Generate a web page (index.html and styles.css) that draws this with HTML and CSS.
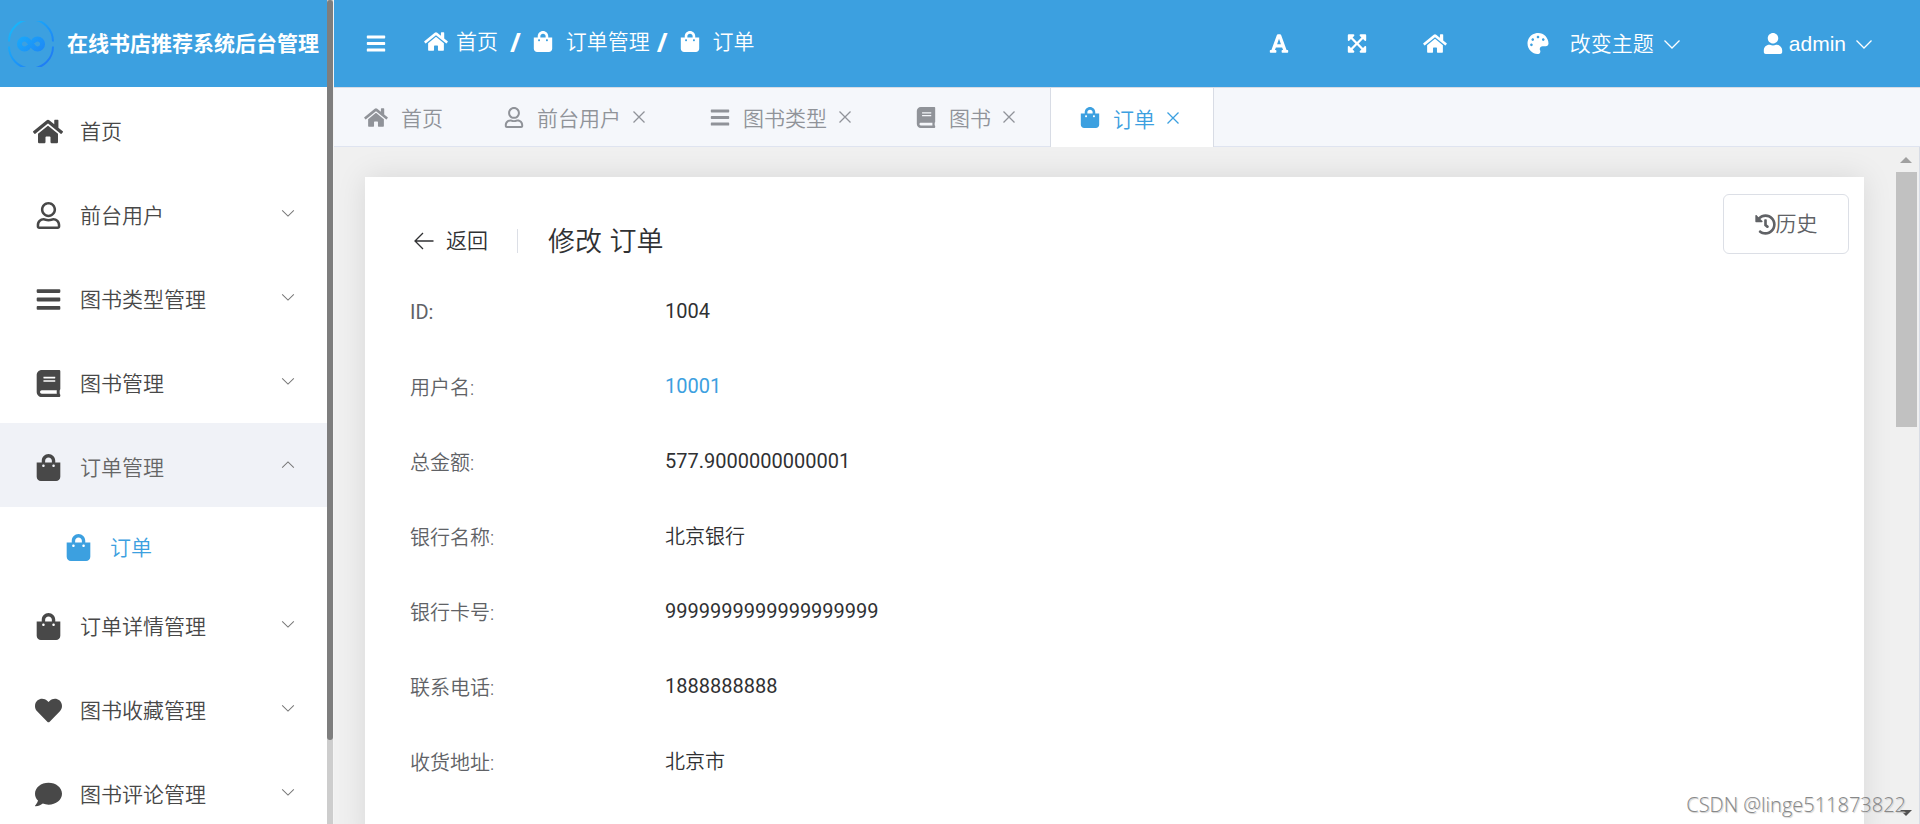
FILE: index.html
```html
<!DOCTYPE html>
<html lang="zh-CN">
<head>
<meta charset="utf-8">
<title>在线书店推荐系统后台管理</title>
<link rel="stylesheet" href="styles.css">
</head>
<body>
<svg class="sprite" aria-hidden="true">
  <symbol id="home" viewBox="0 0 576 512"><path d="M280.37 148.26L96 300.11V464a16 16 0 0 0 16 16l112.06-.29a16 16 0 0 0 15.92-16V368a16 16 0 0 1 16-16h64a16 16 0 0 1 16 16v95.64a16 16 0 0 0 16 16.05L464 480a16 16 0 0 0 16-16V300L295.67 148.26a12.19 12.19 0 0 0-15.3 0zM571.6 251.47L488 182.56V44.05a12 12 0 0 0-12-12h-56a12 12 0 0 0-12 12v72.61L318.47 43a48 48 0 0 0-61 0L4.34 251.47a12 12 0 0 0-1.6 16.9l25.5 31A12 12 0 0 0 45.15 301l235.22-193.74a12.19 12.19 0 0 1 15.3 0L530.9 301a12 12 0 0 0 16.9-1.6l25.5-31a12 12 0 0 0-1.7-16.93z"/></symbol>
  <symbol id="user-line" viewBox="0 0 448 512"><path d="M313.6 304c-28.7 0-42.5 16-89.6 16-47.1 0-60.8-16-89.6-16C60.2 304 0 364.2 0 438.4V464c0 26.5 21.5 48 48 48h352c26.5 0 48-21.5 48-48v-25.6c0-74.2-60.2-134.4-134.4-134.4zM400 464H48v-25.6c0-47.6 38.8-86.4 86.4-86.4 14.6 0 38.3 16 89.6 16 51.7 0 74.9-16 89.6-16 47.6 0 86.4 38.8 86.4 86.4V464zM224 288c79.5 0 144-64.5 144-144S303.5 0 224 0 80 64.5 80 144s64.5 144 144 144zm0-240c52.9 0 96 43.1 96 96s-43.1 96-96 96-96-43.1-96-96 43.1-96 96-96z"/></symbol>
  <symbol id="bars" viewBox="0 0 448 512"><path d="M16 132h416c8.837 0 16-7.163 16-16V76c0-8.837-7.163-16-16-16H16C7.163 60 0 67.163 0 76v40c0 8.837 7.163 16 16 16zm0 160h416c8.837 0 16-7.163 16-16v-40c0-8.837-7.163-16-16-16H16c-8.837 0-16 7.163-16 16v40c0 8.837 7.163 16 16 16zm0 160h416c8.837 0 16-7.163 16-16v-40c0-8.837-7.163-16-16-16H16c-8.837 0-16 7.163-16 16v40c0 8.837 7.163 16 16 16z"/></symbol>
  <symbol id="book" viewBox="0 0 448 512"><path d="M448 360V24c0-13.3-10.7-24-24-24H96C43 0 0 43 0 96v320c0 53 43 96 96 96h328c13.3 0 24-10.7 24-24v-16c0-7.5-3.5-14.3-8.9-18.7-4.2-15.4-4.2-59.3 0-74.7 5.4-4.3 8.9-11.1 8.9-18.6zM128 134c0-3.3 2.7-6 6-6h212c3.3 0 6 2.7 6 6v20c0 3.3-2.7 6-6 6H134c-3.3 0-6-2.7-6-6v-20zm0 64c0-3.3 2.7-6 6-6h212c3.3 0 6 2.7 6 6v20c0 3.3-2.7 6-6 6H134c-3.3 0-6-2.7-6-6v-20zm253.4 250H96c-17.7 0-32-14.3-32-32 0-17.6 14.4-32 32-32h285.4c-1.9 17.1-1.9 46.9 0 64z"/></symbol>
  <symbol id="bag" viewBox="0 0 448 512"><path d="M352 160v-32C352 57.42 294.579 0 224 0 153.42 0 96 57.42 96 128v32H0v272c0 44.183 35.817 80 80 80h288c44.183 0 80-35.817 80-80V160h-96zm-192-32c0-35.29 28.71-64 64-64s64 28.71 64 64v32H160v-32zm160 120c-13.255 0-24-10.745-24-24s10.745-24 24-24 24 10.745 24 24-10.745 24-24 24zm-192 0c-13.255 0-24-10.745-24-24s10.745-24 24-24 24 10.745 24 24-10.745 24-24 24z"/></symbol>
  <symbol id="heart" viewBox="0 0 512 512"><path d="M462.3 62.6C407.5 15.9 326 24.3 275.7 76.2L256 96.5l-19.7-20.3C186.1 24.3 104.5 15.9 49.7 62.6c-62.8 53.6-66.1 149.8-9.9 207.9l193.5 199.8c12.5 12.9 32.8 12.9 45.3 0l193.5-199.8c56.3-58.1 53-154.3-9.8-207.9z"/></symbol>
  <symbol id="comment" viewBox="0 0 512 512"><path d="M256 32C114.6 32 0 125.1 0 240c0 49.6 21.4 95 57 130.7C44.5 421.1 2.7 466 2.2 466.5c-2.2 2.3-2.8 5.7-1.5 8.7S4.8 480 8 480c66.3 0 116-31.8 140.6-51.4 32.7 12.3 69 19.4 107.4 19.4 141.4 0 256-93.1 256-208S397.4 32 256 32z"/></symbol>
  <symbol id="font" viewBox="0 0 448 512"><path d="M432 416h-23.41L277.88 53.69A32 32 0 0 0 247.58 32h-47.16a32 32 0 0 0-30.3 21.69L39.41 416H16a16 16 0 0 0-16 16v32a16 16 0 0 0 16 16h128a16 16 0 0 0 16-16v-32a16 16 0 0 0-16-16h-19.58l23.3-64h152.56l23.3 64H304a16 16 0 0 0-16 16v32a16 16 0 0 0 16 16h128a16 16 0 0 0 16-16v-32a16 16 0 0 0-16-16zM176.85 272L224 142.51 271.15 272z"/></symbol>
  <symbol id="expand" viewBox="0 0 448 512"><path d="M448 344v112a23.94 23.94 0 0 1-24 24H312c-21.39 0-32.09-25.9-17-41l36.2-36.2L224 295.6 116.77 402.9 153 439c15.09 15.1 4.39 41-17 41H24a23.94 23.94 0 0 1-24-24V344c0-21.4 25.89-32.1 41-17l36.19 36.2L184.46 256 77.18 148.7 41 185c-15.1 15.1-41 4.4-41-17V56a23.94 23.94 0 0 1 24-24h112c21.39 0 32.09 25.9 17 41l-36.2 36.2L224 216.4l107.23-107.3L295 73c-15.09-15.1-4.39-41 17-41h112a23.94 23.94 0 0 1 24 24v112c0 21.4-25.89 32.1-41 17l-36.19-36.2L263.54 256l107.28 107.3L407 327.1c15.1-15.2 41-4.5 41 16.9z"/></symbol>
  <symbol id="palette" viewBox="0 0 512 512"><path d="M204.3 5C104.9 24.4 24.8 104.3 5.2 203.4c-37 187 131.7 326.4 258.8 306.7 41.2-6.4 61.4-54.6 42.5-91.7-23.1-45.4 9.9-98.4 60.9-98.4h79.7c35.8 0 64.8-29.6 64.9-65.3C511.5 97.1 368.1-26.9 204.3 5zM96 320c-17.7 0-32-14.3-32-32s14.3-32 32-32 32 14.3 32 32-14.3 32-32 32zm32-128c-17.7 0-32-14.3-32-32s14.3-32 32-32 32 14.3 32 32-14.3 32-32 32zm128-64c-17.7 0-32-14.3-32-32s14.3-32 32-32 32 14.3 32 32-14.3 32-32 32zm128 64c-17.7 0-32-14.3-32-32s14.3-32 32-32 32 14.3 32 32-14.3 32-32 32z"/></symbol>
  <symbol id="user" viewBox="0 0 448 512"><path d="M224 256c70.7 0 128-57.3 128-128S294.7 0 224 0 96 57.3 96 128s57.3 128 128 128zm89.6 32h-16.7c-22.2 10.2-46.9 16-72.9 16s-50.6-5.8-72.9-16h-16.7C60.2 288 0 348.2 0 422.4V464c0 26.5 21.5 48 48 48h352c26.5 0 48-21.5 48-48v-41.6c0-74.2-60.2-134.4-134.4-134.4z"/></symbol>
  <symbol id="history" viewBox="0 0 512 512"><path d="M504 255.531c.253 136.64-111.18 248.372-247.82 248.468-59.015.042-113.223-20.53-155.822-54.911-11.077-8.94-11.905-25.541-1.839-35.607l11.267-11.267c8.609-8.609 22.353-9.551 31.891-1.984C173.062 425.135 212.781 440 256 440c101.705 0 184-82.311 184-184 0-101.705-82.311-184-184-184-48.814 0-93.149 18.969-126.068 49.932l50.754 50.754c10.08 10.08 2.941 27.314-11.313 27.314H24c-8.837 0-16-7.163-16-16V38.627c0-14.254 17.234-21.393 27.314-11.314l49.372 49.372C129.209 34.136 189.552 8 256 8c136.81 0 247.747 110.78 248 247.531zm-180.912 78.784l9.823-12.63c8.138-10.463 6.253-25.542-4.21-33.679L288 256.349V152c0-13.255-10.745-24-24-24h-16c-13.255 0-24 10.745-24 24v135.651l65.409 50.874c10.463 8.137 25.541 6.253 33.679-4.21z"/></symbol>
  <symbol id="down" viewBox="0 0 18 18"><path class="line" d="M1.500 5.500L9 13L16.500 5.500"/></symbol>
  <symbol id="up" viewBox="0 0 18 18"><path class="line" d="M1.500 12.500L9 5L16.500 12.500"/></symbol>
  <symbol id="close" viewBox="0 0 14 14"><path class="line" d="M1.500 1.500L12.500 12.500M12.500 1.500L1.500 12.500"/></symbol>
  <symbol id="back" viewBox="0 0 20 20"><path class="line" d="M19.500 10H1M9 2L1 10L9 18"/></symbol>
</svg>
<div class="app">
  <aside class="side">
    <div class="brand">
      <svg class="logo" viewBox="0 0 46 46" aria-hidden="true">
        <defs><linearGradient id="lg" gradientUnits="userSpaceOnUse" x1="6" y1="6" x2="40" y2="40"><stop offset="0" stop-color="#18b4fb"/><stop offset="1" stop-color="#1f7df5"/></linearGradient></defs>
        <path d="M1 20.500A22 22 0 0 1 45 20.500M1 25.500A22 22 0 0 0 45 25.500" fill="none" stroke="url(#lg)" stroke-width="2"/>
        <path d="M20 26.500A5 5 0 1 1 20 19.500L26 26.500A5 5 0 1 0 26 19.500" fill="none" stroke="url(#lg)" stroke-width="5" stroke-linecap="round" stroke-linejoin="round"/>
      </svg>
      <span class="brand-name">在线书店推荐系统后台管理</span>
    </div>
    <nav class="menu">
      <a class="item" href="#"><span class="cap"><svg class="ic big wide"><use href="#home"/></svg></span><span class="txt">首页</span></a>
      <a class="item" href="#"><span class="cap"><svg class="ic big"><use href="#user-line"/></svg></span><span class="txt">前台用户</span><svg class="arr"><use href="#down"/></svg></a>
      <a class="item" href="#"><span class="cap"><svg class="ic big"><use href="#bars"/></svg></span><span class="txt">图书类型管理</span><svg class="arr"><use href="#down"/></svg></a>
      <a class="item" href="#"><span class="cap"><svg class="ic big"><use href="#book"/></svg></span><span class="txt">图书管理</span><svg class="arr"><use href="#down"/></svg></a>
      <a class="item open" href="#"><span class="cap"><svg class="ic big"><use href="#bag"/></svg></span><span class="txt">订单管理</span><svg class="arr"><use href="#up"/></svg></a>
      <a class="item sub" href="#"><span class="cap"><svg class="ic big"><use href="#bag"/></svg></span><span class="txt">订单</span></a>
      <a class="item" href="#"><span class="cap"><svg class="ic big"><use href="#bag"/></svg></span><span class="txt">订单详情管理</span><svg class="arr"><use href="#down"/></svg></a>
      <a class="item" href="#"><span class="cap"><svg class="ic big"><use href="#heart"/></svg></span><span class="txt">图书收藏管理</span><svg class="arr"><use href="#down"/></svg></a>
      <a class="item" href="#"><span class="cap"><svg class="ic big"><use href="#comment"/></svg></span><span class="txt">图书评论管理</span><svg class="arr"><use href="#down"/></svg></a>
    </nav>
  </aside>
  <div class="side-scroll"><div class="side-thumb"></div></div>
  <div class="main">
    <header class="top">
      <button class="plain" type="button" aria-label="折叠菜单"><svg class="ic"><use href="#bars"/></svg></button>
      <nav class="crumbs">
        <a class="crumb first" href="#"><svg class="ic wide"><use href="#home"/></svg><span class="label">首页</span></a>
        <b class="sep">/</b>
        <a class="crumb" href="#"><svg class="ic"><use href="#bag"/></svg><span class="label">订单管理</span></a>
        <b class="sep tight">/</b>
        <a class="crumb" href="#"><svg class="ic"><use href="#bag"/></svg><span class="label">订单</span></a>
      </nav>
      <div class="tools">
        <button class="plain tool" type="button" aria-label="字体"><svg class="ic"><use href="#font"/></svg></button>
        <button class="plain tool" type="button" aria-label="全屏"><svg class="ic"><use href="#expand"/></svg></button>
        <button class="plain tool" type="button" aria-label="主页"><svg class="ic wide"><use href="#home"/></svg></button>
        <button class="plain theme" type="button"><svg class="ic"><use href="#palette"/></svg><span class="label">改变主题</span><svg class="caret"><use href="#down"/></svg></button>
        <button class="plain account" type="button"><svg class="ic"><use href="#user"/></svg><span>admin</span><svg class="caret"><use href="#down"/></svg></button>
      </div>
    </header>
    <nav class="tabs">
      <a class="tab" href="#"><svg class="ic wide"><use href="#home"/></svg><span>首页</span></a>
      <a class="tab" href="#"><svg class="ic"><use href="#user-line"/></svg><span>前台用户</span><svg class="x"><use href="#close"/></svg></a>
      <a class="tab" href="#"><svg class="ic"><use href="#bars"/></svg><span>图书类型</span><svg class="x"><use href="#close"/></svg></a>
      <a class="tab" href="#"><svg class="ic"><use href="#book"/></svg><span>图书</span><svg class="x"><use href="#close"/></svg></a>
      <a class="tab active" href="#"><svg class="ic"><use href="#bag"/></svg><span>订单</span><svg class="x"><use href="#close"/></svg></a>
    </nav>
    <div class="body">
      <main class="view">
        <section class="card">
          <div class="card-head">
            <button class="plain back" type="button"><svg class="back-ic"><use href="#back"/></svg><span class="label">返回</span></button>
            <h1 class="title label">修改 订单</h1>
          </div>
          <button class="history" type="button"><svg class="ic"><use href="#history"/></svg><span class="label">历史</span></button>
          <dl class="rows">
            <dt class="latin">ID:</dt><dd class="latin">1004</dd>
            <dt>用户名:</dt><dd class="latin"><a class="link" href="#">10001</a></dd>
            <dt>总金额:</dt><dd class="latin">577.9000000000001</dd>
            <dt>银行名称:</dt><dd>北京银行</dd>
            <dt>银行卡号:</dt><dd class="latin">9999999999999999999</dd>
            <dt>联系电话:</dt><dd class="latin">1888888888</dd>
            <dt>收货地址:</dt><dd>北京市</dd>
          </dl>
        </section>
      </main>
      <div class="scroll"><i class="tri up"></i><i class="thumb"></i><i class="tri down"></i></div>
    </div>
  </div>
  <div class="mark">CSDN @linge511873822</div>
</div>
</body>
</html>
```
FILE: styles.css
```css
* { box-sizing: border-box; }

body {
  margin: 0;
  font-family: "Liberation Sans", "Noto Sans CJK SC", sans-serif;
  font-size: 21px;
  font-weight: 350;
  color: #303133;
}

a { color: inherit; text-decoration: none; }

.sprite { position: absolute; width: 0; height: 0; }

.line { fill: none; stroke: currentColor; stroke-width: 1.3; }

.ic { width: 20px; height: 21px; fill: currentColor; flex: none; }
.ic.wide { width: 24px; }
.ic.big { width: 27px; height: 27px; }
.ic.big.wide { width: 30px; }

.label { padding-bottom: 4px; }

.app { position: relative; display: flex; height: 100vh; overflow: hidden; background: #fff; }

/* sidebar */
.side { width: 327px; flex: none; overflow: hidden; }

.brand {
  display: flex;
  align-items: center;
  gap: 13px;
  height: 87px;
  padding-left: 8px;
  background: #3ca0e0;
  color: #fff;
}
.logo { width: 46px; height: 46px; flex: none; }
.brand-name { padding-bottom: 4px; font-weight: 700; white-space: nowrap; }

.item { display: flex; align-items: center; height: 84px; padding: 0 32px 0 30px; color: #484848; }
.cap { display: flex; justify-content: center; width: 36px; margin-right: 14px; padding-top: 5px; }
.txt { padding-top: 2px; }
.arr { width: 14px; height: 14px; margin-left: auto; color: #777; }
.item.open { background: #f0f2f7; }
.item.open .txt { color: #666; }
.item.sub { height: 75px; padding-left: 60px; color: #3ca0e0; }

.side-scroll { width: 7px; flex: none; background: #cdcdcd; border-right: 1px solid #f4f4f4; }
.side-thumb { height: 740px; background: #7e7e7e; border-radius: 3px; }

/* header */
.main { display: flex; flex-direction: column; flex: 1; min-width: 0; }

.plain {
  display: flex;
  align-items: center;
  padding: 0;
  border: 0;
  background: none;
  color: inherit;
  font: inherit;
}

.top {
  display: flex;
  align-items: center;
  height: 87px;
  flex: none;
  padding: 0 47px 0 32px;
  background: #3ca0e0;
  color: #fff;
}
.crumbs { display: flex; align-items: center; margin-left: 38px; padding-bottom: 4px; }
.crumb { display: flex; align-items: center; gap: 13px; }
.crumb.first { gap: 8px; }
.sep { margin: 0 12px; font: 700 26px/30px "Noto Sans", sans-serif; }
.sep.tight { margin-left: 7px; }

.tools { display: flex; align-items: center; margin-left: auto; }
.tool { justify-content: center; width: 78px; }
.theme { margin-left: 52px; }
.theme .ic { width: 24px; margin-right: 20px; }
.account { margin-left: 82px; }
.account .ic { margin-right: 6px; }
.caret { width: 18px; height: 18px; margin-left: 9px; }

/* tabs */
.tabs {
  display: flex;
  height: 60px;
  flex: none;
  border-top: 1px solid #d8dce5;
  border-bottom: 1px solid #dfe4f0;
  background: #f5f7fb;
}
.tab {
  display: flex;
  align-items: center;
  gap: 13px;
  padding: 0 30px;
  border-right: 1px solid transparent;
  color: #909399;
}
.x { width: 14px; height: 14px; margin: 0 3px 0 -2px; }
.tab.active {
  margin-bottom: -1px;
  background: #fff;
  border-left: 1px solid #d8dce5;
  border-right-color: #d8dce5;
  color: #3ca0e0;
  padding-left: 29px;
}

/* content */
.body { display: flex; flex: 1; min-height: 0; background: #f0f0f0; border-right: 1px solid #d8dce5; }
.view { flex: 1; min-width: 0; padding: 30px 31px 0; overflow: hidden; }

.card {
  position: relative;
  min-height: 100%;
  padding: 46px 45px;
  background: #fff;
  box-shadow: 0 0 28px rgba(0, 0, 0, .1);
}
.card-head { display: flex; align-items: center; height: 36px; padding-left: 4px; }
.back { padding-right: 29px; border-right: 1px solid #dcdfe6; height: 24px; gap: 12px; }
.back-ic { width: 20px; height: 20px; }
.title { margin: 0 0 0 30px; font-size: 27px; font-weight: 350; }

.history {
  position: absolute;
  top: 17px;
  right: 15px;
  display: flex;
  align-items: center;
  justify-content: center;
  width: 126px;
  height: 60px;
  border: 1px solid #dcdfe6;
  border-radius: 6px;
  background: #fff;
  color: #606266;
  font: inherit;
}
.history .ic { width: 21px; }

.rows {
  display: grid;
  grid-template-columns: 255px 1fr;
  grid-auto-rows: 75px;
  align-items: center;
  margin: 15px 0 0;
  font-family: Roboto, "Noto Sans CJK SC", sans-serif;
  font-size: 20px;
}
dt { color: #606266; }
dd { margin: 0; padding-bottom: 2px; }
.latin { font-weight: 400; }
.link { color: #3ca0e0; }

.scroll {
  display: flex;
  flex-direction: column;
  align-items: center;
  width: 24px;
  padding: 10px 2px 8px 0;
}
.tri { border: 6px solid transparent; }
.tri.up { border-top: 0; border-bottom-color: #a0a0a0; }
.tri.down { margin-top: auto; border-bottom: 0; border-top-color: #505050; }
.thumb { width: 21px; height: 255px; margin-top: 9px; background: #c1c1c1; }

.mark {
  position: absolute;
  right: 14px;
  bottom: 6px;
  font-family: "Open Sans", sans-serif;
  font-size: 20px;
  color: #888;
  text-shadow: 1px 1px 1px #ccc;
}
```
